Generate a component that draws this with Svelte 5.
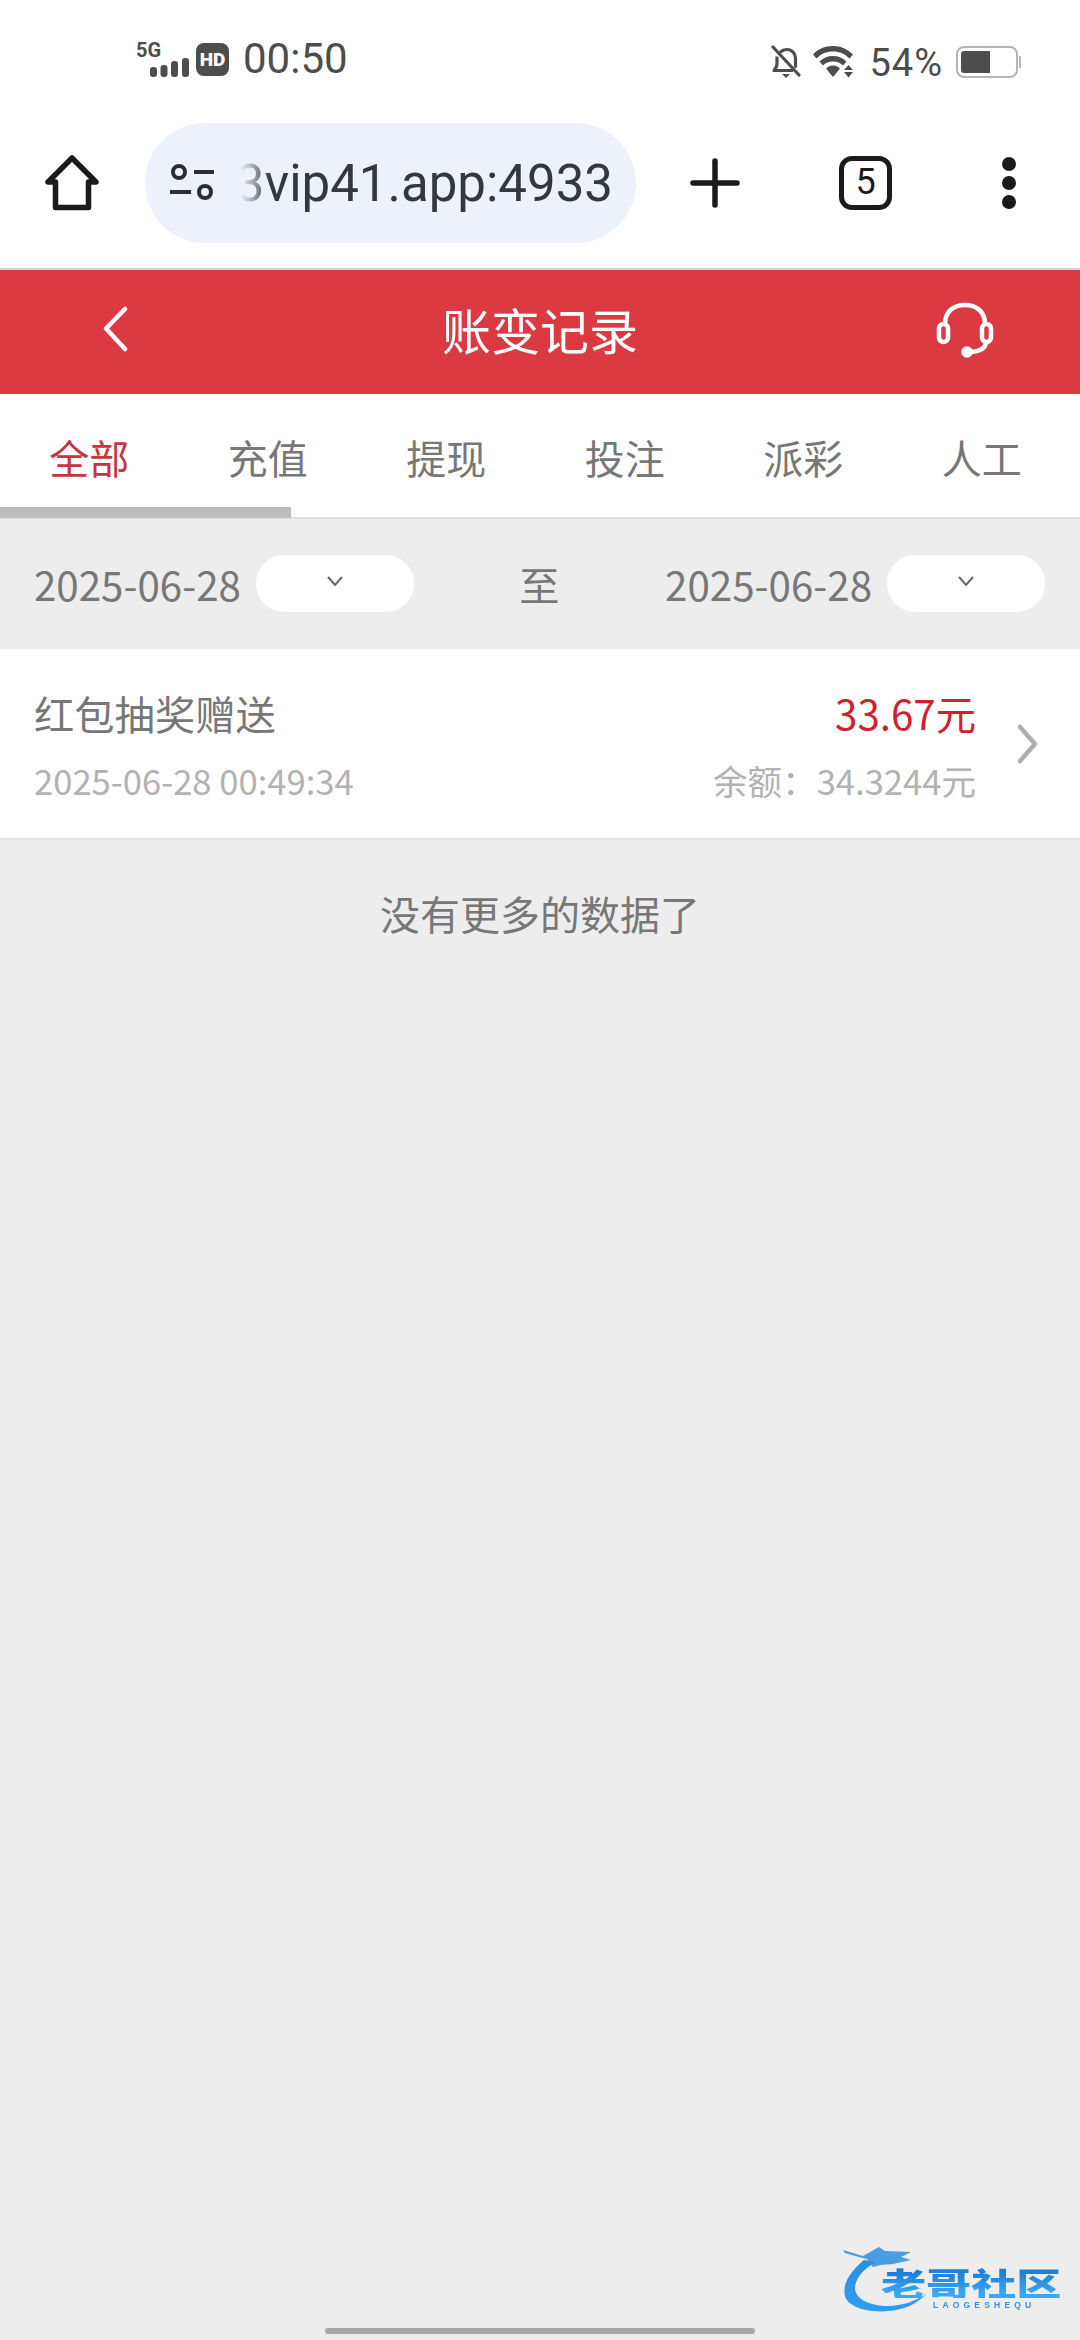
<script>
  const tabs = ['全部', '充值', '提现', '投注', '派彩', '人工'];
</script>

<div class="page">
  <div class="status">
    <div class="cluster left">
      <div class="signal">
        <span class="five">5G</span>
        <svg class="bars" width="40" height="20" viewBox="0 0 40 20">
          <rect x="0" y="10" width="7" height="10" rx="3" />
          <rect x="10.500" y="8" width="7" height="12" rx="3" />
          <rect x="21" y="4" width="7" height="16" rx="3" />
          <rect x="32" y="1" width="7" height="19" rx="3" />
        </svg>
      </div>
      <span class="hd">HD</span>
      <span class="time">00:50</span>
    </div>
    <div class="cluster right">
      <svg width="30" height="34" viewBox="0 0 30 34" fill="none" stroke="#4d4d4d" stroke-width="3.200">
        <path d="M10 6.500C12 5 14 4.500 16 4.500c5 0 8.500 4 8.500 9v8" stroke-linecap="round" />
        <path d="M6 11.500v7.500c0 2-1 4-3 6.500h19" stroke-linejoin="round" />
        <path d="M2 2l26 28" stroke-linecap="round" />
        <path d="M11 29h8l-4 4z" fill="#4d4d4d" stroke="none" />
      </svg>
      <svg class="wifi" width="42" height="32" viewBox="0 0 42 32" fill="#4d4d4d">
        <path d="M0 8.500C5 3 11.500 0 20 0s14 3 20 8.500l-3.500 4C32 8 27 5.500 20 5.500S8 8 3.500 12.500z" />
        <path d="M6.500 15.500C10 12 14.500 10 20 10s10 2 13.500 5.500l-3.500 4c-2.500-2.500-6-4-10-4s-7.500 1.500-10 4z" />
        <path d="M13 22.500c2-2 4.500-3 7-3s5 1 7 3L20 31z" />
        <path d="M35.500 19l4.500 5h-9zM31 26h9l-4.500 5.500z" />
      </svg>
      <span class="pct">54%</span>
      <div class="battery"><span class="fill"></span></div>
      <span class="tip"></span>
    </div>
  </div>

  <div class="toolbar">
    <svg class="home" width="54" height="56" viewBox="0 0 54 56" fill="none" stroke="#1a1a1a" stroke-width="5.500" stroke-linejoin="round">
      <path d="M27 3L3 27h7.500v25.500h33V27H51z" />
    </svg>
    <div class="pill">
      <svg class="tune" width="46" height="38" viewBox="0 0 46 38" fill="none" stroke="#2b2d30" stroke-width="4">
        <circle cx="10" cy="8" r="6" />
        <path d="M25 8h20M1 28h21" />
        <circle cx="36" cy="28" r="6" />
      </svg>
      <div class="url"><span>3vip41.app:4933</span></div>
    </div>
    <svg class="plus" width="50" height="50" viewBox="0 0 50 50" stroke="#1a1a1a" stroke-width="5.500" stroke-linecap="round">
      <path d="M25 3v44M3 25h44" />
    </svg>
    <div class="count">5</div>
    <div class="dots"><i></i><i></i><i></i></div>
  </div>

  <header class="head">
    <svg class="back" width="26" height="46" viewBox="0 0 26 46" fill="none" stroke="#fff" stroke-width="4.500" stroke-linecap="round" stroke-linejoin="round">
      <path d="M23 3L4 22.500 23 43" />
    </svg>
    <h1>账变记录</h1>
    <svg class="phones" width="58" height="56" viewBox="0 0 58 56" fill="none" stroke="#fff" stroke-width="4.500" stroke-linecap="round">
      <path d="M9 22C9 10 17 3 29 3s20 7 20 19" />
      <rect x="3" y="22" width="9" height="18" rx="4.500" />
      <rect x="46" y="22" width="9" height="18" rx="4.500" />
      <path d="M50 40c0 6-6 9-14 10" />
      <circle cx="31" cy="50" r="3.500" fill="#fff" />
    </svg>
  </header>

  <nav class="tabs">
    {#each tabs as t, i}
      <span class="tab" class:active={i === 0}>{t}</span>
    {/each}
    <span class="thumb"></span>
  </nav>

  <div class="dates">
    <span class="date">2025-06-28</span>
    <div class="select">
      <svg width="18" height="12" viewBox="0 0 18 12" fill="none" stroke="#666" stroke-width="2"><path d="M2 2l7 8 7-8" /></svg>
    </div>
    <span class="to">至</span>
    <span class="date">2025-06-28</span>
    <div class="select">
      <svg width="18" height="12" viewBox="0 0 18 12" fill="none" stroke="#666" stroke-width="2"><path d="M2 2l7 8 7-8" /></svg>
    </div>
  </div>

  <div class="row">
    <div class="col grow">
      <span class="title">红包抽奖赠送</span>
      <span class="sub">2025-06-28 00:49:34</span>
    </div>
    <div class="col end">
      <span class="amount">33.67元</span>
      <span class="sub">余额：34.3244元</span>
    </div>
    <svg class="more" width="22" height="40" viewBox="0 0 22 40" fill="none" stroke="#aeaeae" stroke-width="4.500" stroke-linecap="round" stroke-linejoin="round">
      <path d="M3 3l15 17L3 37" />
    </svg>
  </div>

  <p class="nomore">没有更多的数据了</p>

  <div class="logo">
    <svg class="swoosh" width="100" height="70" viewBox="0 0 100 70">
      <defs>
        <linearGradient id="sw" x1="0" y1="0" x2="0" y2="1">
          <stop offset="0" stop-color="#2b8fe0" />
          <stop offset="1" stop-color="#2f9df2" />
        </linearGradient>
      </defs>
      <path fill="url(#sw)" d="M22 14C8 26 0 38 3 50c3 11 22 17 44 15 12-1 26-5 37-17-10 7-24 12-38 12C28 60 13 53 13 42c0-9 8-19 21-26z" />
      <path fill="#2b8fe0" opacity=".85" d="M1 4l20 6 16-9 6 4 26 1-10 5 10 3-18 4-12 1-8 2-6-8-12-3-10-3z" />
    </svg>
    <span class="zh">老哥社区</span>
    <span class="en">LAOGESHEQU</span>
  </div>

  <div class="handle"></div>
</div>

<style>
  :global(body) {
    margin: 0;
    background: #ededed;
  }
  .page {
    position: relative;
    width: 1080px;
    height: 2340px;
    overflow: hidden;
    background: #ededed;
    font-family: "Noto Sans CJK SC", "Noto Sans", sans-serif;
  }
  .status {
    height: 97px;
    box-sizing: border-box;
    background: #fff;
    display: flex;
    justify-content: space-between;
    align-items: flex-start;
    padding: 42px 59px 0 136px;
    font-family: Roboto, sans-serif;
    color: #4d4d4d;
  }
  .cluster {
    display: flex;
    align-items: center;
  }
  .signal {
    position: relative;
    width: 54px;
    height: 34px;
  }
  .five {
    position: absolute;
    left: 0;
    top: -2px;
    font-size: 20px;
    font-weight: 700;
    line-height: 20px;
  }
  .bars {
    position: absolute;
    left: 14px;
    top: 15px;
    fill: #4d4d4d;
  }
  .hd {
    width: 33px;
    height: 33px;
    margin-left: 6px;
    border-radius: 8px;
    background: #4d4d4d;
    color: #fff;
    font-size: 19px;
    font-weight: 900;
    line-height: 33px;
    text-align: center;
  }
  .time {
    margin-left: 14px;
    font-size: 42px;
    line-height: 34px;
  }
  .right {
    margin-top: 2px;
  }
  .wifi {
    margin-left: 12px;
  }
  .pct {
    margin-left: 14px;
    font-size: 38px;
    letter-spacing: 1px;
    line-height: 32px;
    margin-top: 3px;
  }
  .battery {
    width: 62px;
    height: 32px;
    box-sizing: border-box;
    margin-left: 13px;
    padding: 3px;
    border: 2.500px solid #b5b5b5;
    border-radius: 8px;
  }
  .fill {
    display: block;
    width: 29px;
    height: 100%;
    background: #4d4d4d;
    border-radius: 3px 0 0 3px;
  }
  .tip {
    width: 2px;
    height: 12px;
    margin-left: 1px;
    background: #b5b5b5;
  }
  .toolbar {
    height: 173px;
    box-sizing: border-box;
    background: #fff;
    border-bottom: 2px solid #d9d0ce;
    display: flex;
    align-items: center;
    padding: 0 0 0 45px;
  }
  .pill {
    width: 491px;
    height: 120px;
    margin-left: 46px;
    padding-left: 24px;
    box-sizing: border-box;
    border-radius: 60px;
    background: #edf2fa;
    display: flex;
    align-items: center;
  }
  .url {
    width: 372px;
    margin-left: 26px;
    padding-top: 3px;
    overflow: hidden;
    direction: rtl;
    font-family: Roboto, sans-serif;
    font-size: 51px;
    line-height: 60px;
    color: #34373b;
    -webkit-mask-image: linear-gradient(90deg, rgba(0,0,0,0) 0, #000 30px, #000 100%);
    mask-image: linear-gradient(90deg, rgba(0,0,0,0) 0, #000 30px, #000 100%);
  }
  .url span {
    direction: ltr;
    unicode-bidi: isolate;
    white-space: nowrap;
  }
  .plus {
    margin-left: 54px;
  }
  .count {
    width: 53px;
    height: 54px;
    box-sizing: border-box;
    margin-left: 99px;
    border: 5.500px solid #1a1a1a;
    border-radius: 13px;
    font-family: Roboto, sans-serif;
    font-size: 36px;
    font-weight: 400;
    line-height: 42px;
    text-align: center;
    color: #1a1a1a;
  }
  .dots {
    margin-left: 110px;
    display: flex;
    flex-direction: column;
    gap: 5px;
  }
  .dots i {
    width: 14px;
    height: 14px;
    border-radius: 50%;
    background: #1a1a1a;
  }
  .head {
    position: relative;
    height: 124px;
    background: #dc3a43;
    display: flex;
    align-items: center;
    justify-content: space-between;
    padding: 0 86px 0 102px;
  }
  .head h1 {
    position: absolute;
    left: 0;
    right: 0;
    top: 0;
    margin: 0;
    font-size: 49px;
    font-weight: 400;
    line-height: 118px;
    text-align: center;
    color: #fff;
  }
  .back {
    margin-top: -6px;
  }
  .phones {
    margin-top: -4px;
  }
  .tabs {
    position: relative;
    height: 125px;
    box-sizing: border-box;
    background: #fff;
    border-bottom: 2px solid #dedede;
    display: flex;
    padding-top: 33px;
  }
  .tab {
    width: 178.500px;
    font-size: 40px;
    line-height: 60px;
    text-align: center;
    color: #777;
  }
  .tab.active {
    color: #c8343f;
  }
  .thumb {
    position: absolute;
    left: 0;
    bottom: -1px;
    width: 291px;
    height: 11px;
    background: #bdbdbd;
  }
  .dates {
    height: 130px;
    box-sizing: border-box;
    padding: 0 35px 0 34px;
    display: flex;
    align-items: center;
    color: #777;
    font-size: 40.300px;
  }
  .date {
    line-height: 60px;
  }
  .select {
    width: 158px;
    height: 57px;
    margin-left: 15px;
    margin-top: -2px;
    border-radius: 28px;
    background: #fff;
    display: flex;
    align-items: center;
    justify-content: center;
  }
  .select svg {
    margin-top: -4px;
  }
  .to {
    flex: 1;
    text-align: center;
    line-height: 60px;
  }
  .row {
    height: 191px;
    box-sizing: border-box;
    background: #fff;
    border-bottom: 2px solid #e2e2e2;
    display: flex;
    align-items: flex-start;
    padding: 34px 41px 0 34px;
  }
  .col {
    display: flex;
    flex-direction: column;
  }
  .grow {
    flex: 1;
  }
  .end {
    align-items: flex-end;
  }
  .title {
    font-size: 40.300px;
    line-height: 60px;
    color: #777;
  }
  .amount {
    font-size: 40.300px;
    line-height: 60px;
    color: #d0222c;
  }
  .sub {
    margin-top: 12px;
    font-size: 34.600px;
    line-height: 50px;
    color: #b2b2b2;
  }
  .more {
    margin: 41px 0 0 41px;
  }
  .nomore {
    margin: 43px 0 0;
    font-size: 40px;
    line-height: 60px;
    text-align: center;
    color: #777;
  }
  .logo {
    position: absolute;
    left: 840px;
    top: 2246px;
    width: 230px;
    height: 70px;
    filter: blur(0.7px);
  }
  .swoosh {
    position: absolute;
    left: 2px;
    top: 0;
  }
  .zh {
    position: absolute;
    left: 41px;
    top: 20px;
    font-size: 32px;
    font-weight: 900;
    line-height: 32px;
    white-space: nowrap;
    color: transparent;
    background: linear-gradient(180deg, #1d7fd8 20%, #3aa6f5 85%);
    -webkit-background-clip: text;
    background-clip: text;
    transform: scaleX(1.41);
    transform-origin: left center;
  }
  .en {
    position: absolute;
    left: 93px;
    top: 54px;
    font-family: "Liberation Sans", sans-serif;
    font-size: 8.500px;
    font-weight: 700;
    line-height: 10px;
    letter-spacing: 4.200px;
    white-space: nowrap;
    color: #3b8fd8;
  }
  .handle {
    position: absolute;
    left: 325px;
    top: 2328px;
    width: 430px;
    height: 6px;
    border-radius: 3px;
    background: #a8a8a8;
  }
</style>
